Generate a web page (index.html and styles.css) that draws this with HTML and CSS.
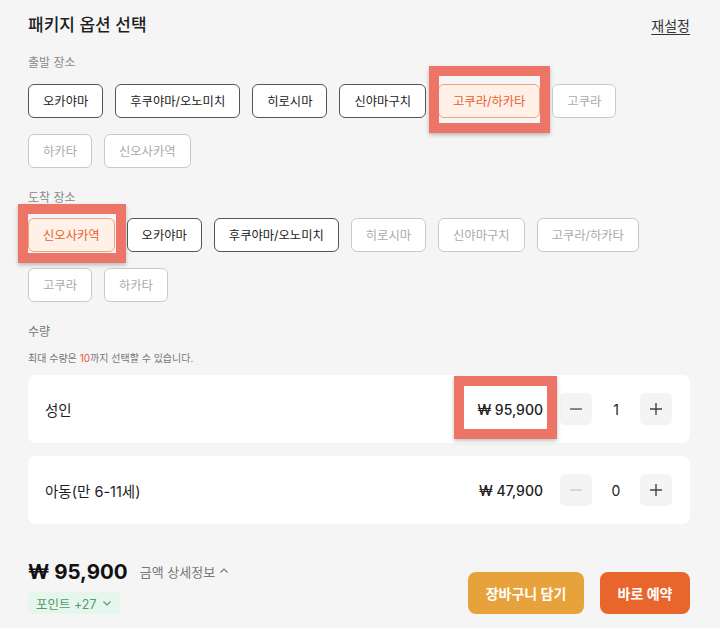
FILE: index.html
```html
<!DOCTYPE html>
<html lang="ko">
<head>
<meta charset="utf-8">
<link rel="stylesheet" href="styles.css">
</head>
<body>
<div class="page">
  <div class="head">
    <h1 class="title">패키지 옵션 선택</h1>
    <a class="reset">재설정</a>
  </div>

  <div class="label first">출발 장소</div>
  <div class="chips">
    <span class="chip">오카야마</span>
    <span class="chip">후쿠야마/오노미치</span>
    <span class="chip">히로시마</span>
    <span class="chip">신야마구치</span>
    <span class="chip sel">고쿠라/하카타<span class="hl hl-a"></span></span>
    <span class="chip off">고쿠라</span>
    <span class="chip off">하카타</span>
    <span class="chip off">신오사카역</span>
  </div>

  <div class="label">도착 장소</div>
  <div class="chips">
    <span class="chip sel">신오사카역<span class="hl hl-b"></span></span>
    <span class="chip">오카야마</span>
    <span class="chip">후쿠야마/오노미치</span>
    <span class="chip off">히로시마</span>
    <span class="chip off">신야마구치</span>
    <span class="chip off">고쿠라/하카타</span>
    <span class="chip off">고쿠라</span>
    <span class="chip off">하카타</span>
  </div>

  <div class="label qty">수량</div>
  <div class="note">최대 수량은 <em>10</em>까지 선택할 수 있습니다.</div>

  <div class="card">
    <span class="name">성인</span>
    <span class="price">₩ 95,900<span class="hl hl-c"></span></span>
    <div class="stepper">
      <span class="step"><svg width="14" height="14" viewBox="0 0 14 14"><path d="M1 7h12" stroke="#555" stroke-width="1.4"/></svg></span>
      <span class="count">1</span>
      <span class="step"><svg width="14" height="14" viewBox="0 0 14 14"><path d="M1 7h12M7 1v12" stroke="#444" stroke-width="1.4"/></svg></span>
    </div>
  </div>
  <div class="card">
    <span class="name">아동(만 6-11세)</span>
    <span class="price">₩ 47,900</span>
    <div class="stepper">
      <span class="step"><svg width="14" height="14" viewBox="0 0 14 14"><path d="M1 7h12" stroke="#cfcfcf" stroke-width="1.4"/></svg></span>
      <span class="count">0</span>
      <span class="step"><svg width="14" height="14" viewBox="0 0 14 14"><path d="M1 7h12M7 1v12" stroke="#444" stroke-width="1.4"/></svg></span>
    </div>
  </div>

  <div class="footer">
    <div class="sum">
      <div class="total"><span class="amount">₩ 95,900</span><span class="detail">금액 상세정보 <svg width="10" height="10" viewBox="0 0 10 10"><path d="M1.5 6.5L5 3l3.5 3.5" fill="none" stroke="#777" stroke-width="1.1"/></svg></span></div>
      <span class="points">포인트 +27 <svg width="10" height="10" viewBox="0 0 10 10"><path d="M1.5 3.5L5 7l3.5-3.5" fill="none" stroke="#4f9a70" stroke-width="1.1"/></svg></span>
    </div>
    <div class="actions">
      <button class="btn cart">장바구니 담기</button>
      <button class="btn book">바로 예약</button>
    </div>
  </div>
</div>
</body>
</html>
```

FILE: styles.css
```css
* { box-sizing: border-box; }
html, body { margin: 0; background: #f5f5f5; }
body {
  font-family: Inter, "Noto Sans CJK KR", sans-serif;
  color: #222;
}
.page { padding: 13px 30px 0 28px; }
.head {
  display: flex;
  justify-content: space-between;
  align-items: center;
  height: 24px;
}
.title {
  margin: 0;
  font-size: 17px;
  font-weight: 500;
  line-height: 24px;
  color: #1e1e1e;
}
.reset {
  font-size: 14px;
  color: #333;
  text-decoration: underline;
  text-underline-offset: 3px;
}
.label {
  font-size: 12px;
  line-height: 16px;
  color: #8a8a8a;
  margin: 22px 0 12px;
}
.label.first { margin-top: 18px; margin-bottom: 13px; }
.label.qty { color: #777; margin-bottom: 11px; }
.chips {
  display: flex;
  flex-wrap: wrap;
  gap: 16px 12px;
}
.chip {
  position: relative;
  display: inline-flex;
  align-items: center;
  height: 34px;
  padding: 0 14px;
  font-size: 12.3px;
  color: #222;
  background: #fff;
  border: 1px solid #555;
  border-radius: 6px;
  white-space: nowrap;
}
.chip.off { color: #aaa; border-color: #c9c9c9; }
.chip.sel {
  color: #e8602c;
  background: #fff1e7;
  border-color: #f0a27f;
}
.hl {
  position: absolute;
  border: 10px solid #ec7568;
  box-shadow: 0 2px 4px rgba(0,0,0,0.25);
  pointer-events: none;
}
.hl-a { left: -10px; right: -11px; top: -19px; bottom: -16px; }
.hl-b { left: -11px; right: -12px; top: -15px; bottom: -12px; }
.hl-c { left: -23px; right: -14px; top: -25px; bottom: -21px; }
.note {
  font-size: 10px;
  line-height: 14px;
  color: #777;
  margin-bottom: 10px;
}
.note em { font-style: normal; color: #e8533c; }
.card {
  display: flex;
  align-items: center;
  height: 68px;
  padding: 0 18px 0 17px;
  background: #fff;
  border-radius: 8px;
  margin-bottom: 13px;
}
.name { flex: 1; font-size: 14.5px; color: #1e1e1e; }
.price {
  position: relative;
  font-size: 14px;
  font-weight: 500;
  color: #222;
  margin-right: 17px;
}
.stepper { display: flex; align-items: center; }
.step {
  display: flex;
  align-items: center;
  justify-content: center;
  width: 32px;
  height: 32px;
  background: #f4f4f4;
  border-radius: 5px;
}
.count { width: 48px; text-align: center; font-size: 14px; }
.footer {
  display: flex;
  justify-content: space-between;
  align-items: flex-end;
  margin-top: 33px;
}
.sum { display: flex; flex-direction: column; align-items: flex-start; gap: 7px; }
.total { display: flex; align-items: center; height: 28px; }
.amount { font-size: 20.5px; font-weight: 700; color: #111; margin-right: 12px; }
.detail { font-size: 13px; color: #777; display: inline-flex; align-items: center; gap: 4px; }
.points {
  display: inline-flex;
  align-items: center;
  gap: 5px;
  height: 22px;
  padding: 0 8px;
  font-size: 12.5px;
  color: #4f9a70;
  background: #e7f6ec;
  border-radius: 4px;
}
.actions { display: flex; gap: 16px; }
.btn {
  height: 42px;
  border: none;
  border-radius: 8px;
  color: #fff;
  font-family: inherit;
  font-size: 14px;
  font-weight: 700;
}
.cart { width: 116px; background: #e8a23c; }
.book { width: 90px; background: #e8662c; }
```
